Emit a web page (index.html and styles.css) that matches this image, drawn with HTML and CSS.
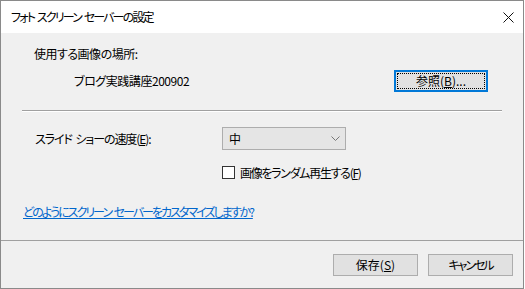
FILE: index.html
```html
<!DOCTYPE html>
<html lang="ja">
<head>
<meta charset="utf-8">
<link rel="stylesheet" href="styles.css">
</head>
<body>
<div class="window">
  <div class="titlebar">
    <span class="title">フォト スクリーン セーバーの設定</span>
    <svg class="close" width="11" height="11" viewBox="0 0 11 11"><path d="M0.5 0.5L10.5 10.5M10.5 0.5L0.5 10.5" stroke="#111" stroke-width="1" fill="none"/></svg>
  </div>
  <div class="content">
    <div class="label-row">使用する画像の場所:</div>
    <div class="path-row">
      <span class="path">ブログ実践講座200902</span>
      <button class="btn focused">参照(<u>B</u>)...</button>
    </div>
    <div class="sep"></div>
    <div class="speed-row">
      <span class="speed-label">スライド ショーの速度(<u>E</u>):</span>
      <div class="combo"><span>中</span>
        <svg width="9" height="5" viewBox="0 0 9 5"><path d="M0.5 0.5L4.5 4.5L8.5 0.5" stroke="#777" fill="none"/></svg>
      </div>
    </div>
    <div class="check-row">
      <span class="checkbox"></span>
      <span class="check-label">画像をランダム再生する(<u>F</u>)</span>
    </div>
    <div class="link-row"><a class="link">どのようにスクリーン セーバーをカスタマイズしますか?</a></div>
  </div>
  <div class="footer">
    <button class="btn fbtn">保存(<u>S</u>)</button>
    <button class="btn fbtn kana">キャンセル</button>
  </div>
</div>
</body>
</html>
```
FILE: styles.css
```css
html, body {
  margin: 0;
  padding: 0;
  background: #ffffff;
}
body {
  font-family: "Noto Sans CJK JP", "Noto Sans", sans-serif;
  font-size: 12px;
  font-feature-settings: "palt";
  color: #000;
}
.window {
  width: 522px;
  height: 287px;
  border: 1px solid #8a8a8a;
  display: flex;
  flex-direction: column;
  background: #f0f0f0;
}
.titlebar {
  height: 32px;
  background: #ffffff;
  display: flex;
  align-items: center;
  justify-content: space-between;
  padding: 0 9px 0 10px;
}
.title {
  font-size: 12px;
  line-height: 16px;
  letter-spacing: -1.85px;
  word-spacing: 2px;
}
.close {
  display: block;
  margin-top: 1px;
}
.content {
  flex: 1;
  display: flex;
  flex-direction: column;
  padding: 0 21px 0 21px;
}
.label-row {
  margin-top: 13px;
  padding-left: 12px;
  line-height: 16px;
  height: 16px;
  letter-spacing: -0.5px;
}
.path-row {
  margin-top: 8px;
  display: flex;
  align-items: center;
  justify-content: space-between;
  padding-left: 52px;
  padding-right: 14px;
  height: 22px;
}
.path {
  line-height: 16px;
  margin-top: -1px;
  letter-spacing: -0.45px;
}
.btn {
  font-family: inherit;
  font-size: 12px;
  font-feature-settings: "palt";
  background: #e1e1e1;
  border: 1px solid #adadad;
  color: #000;
  padding: 0;
  margin: 0;
  height: 22px;
  line-height: 18px;
  position: relative;
}
.btn u { text-decoration-thickness: 1px; }
.kana { letter-spacing: -2px; }
.focused {
  width: 94px;
  border: 2px solid #0078d7;
}
.focused::after {
  content: "";
  position: absolute;
  left: 1px;
  top: 1px;
  right: 1px;
  bottom: 1px;
  border: 1px dotted #000;
}
.sep {
  margin-top: 18px;
  height: 1px;
  background: #a0a0a0;
  border-bottom: 1px solid #ffffff;
}
.speed-row {
  margin-top: 15px;
  display: flex;
  align-items: center;
  height: 23px;
}
.speed-label {
  width: 200px;
  padding-left: 13px;
  box-sizing: border-box;
  line-height: 16px;
  letter-spacing: -1.1px;
  word-spacing: 2px;
}
.combo {
  width: 124px;
  height: 23px;
  box-sizing: border-box;
  border: 1px solid #adadad;
  background: #e5e5e5;
  display: flex;
  align-items: center;
  justify-content: space-between;
  padding: 0 5px 0 6px;
}
.combo span { line-height: 16px; }
.combo svg { display: block; }
.check-row {
  margin-top: 15px;
  display: flex;
  align-items: center;
  padding-left: 200px;
  height: 15px;
  line-height: 16px;
}
.check-label { letter-spacing: -1.3px; }
.checkbox {
  width: 13px;
  height: 13px;
  box-sizing: border-box;
  border: 1px solid #333;
  background: #fff;
  margin-right: 5px;
}
.link-row {
  margin-top: 24px;
  line-height: 16px;
  padding-left: 1px;
}
.link {
  color: #0066cc;
  text-decoration: underline;
  cursor: pointer;
  letter-spacing: -2px;
  word-spacing: 2px;
}
.footer {
  height: 48px;
  border-top: 1px solid #a0a0a0;
  display: flex;
  align-items: flex-start;
  justify-content: flex-end;
  padding: 13px 10px 0 0;
  box-sizing: border-box;
  gap: 10px;
}
.fbtn {
  width: 85px;
  height: 22px;
}
```
